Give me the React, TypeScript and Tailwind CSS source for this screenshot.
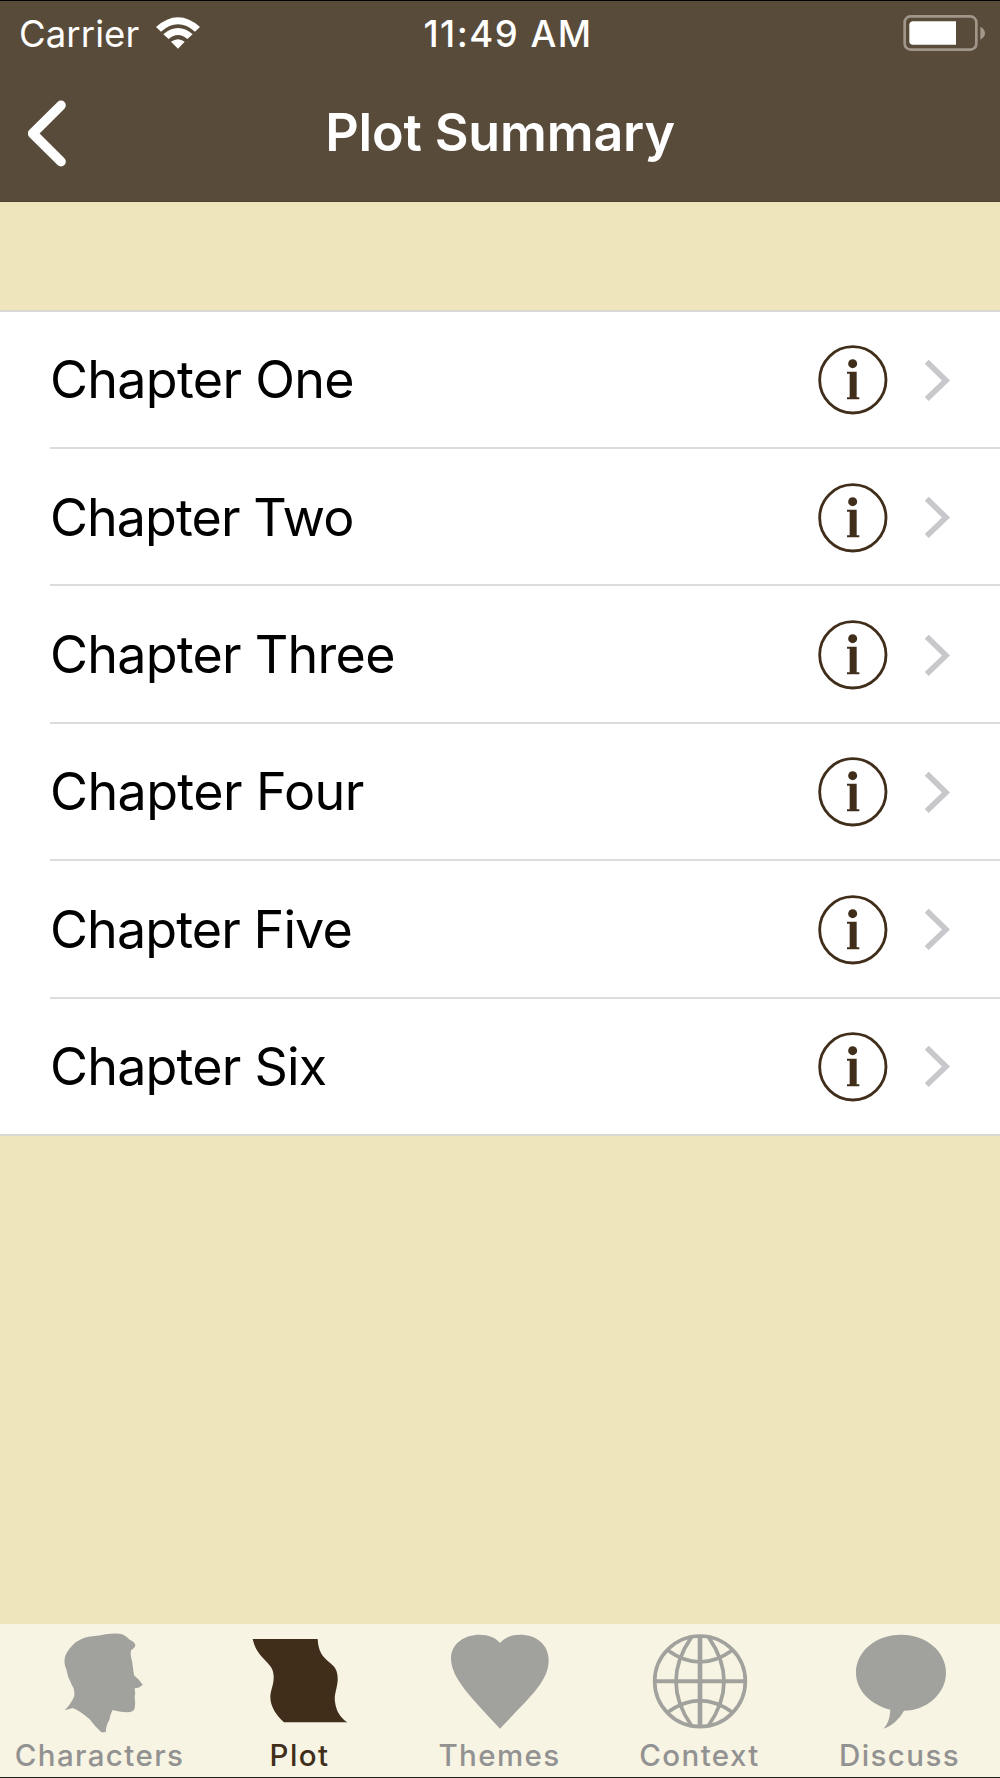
import React from 'react';

const chapters = [
  { name: 'Chapter One', tracking: 'tracking-[-0.7px]' },
  { name: 'Chapter Two', tracking: 'tracking-[-0.95px]' },
  { name: 'Chapter Three', tracking: 'tracking-[-0.75px]' },
  { name: 'Chapter Four', tracking: 'tracking-[-0.6px]' },
  { name: 'Chapter Five', tracking: 'tracking-[-0.9px]' },
  { name: 'Chapter Six', tracking: 'tracking-[-0.8px]' },
];

const tabs = [
  {
    label: 'Characters',
    viewBox: '30 60 300 312',
    icon: (
      <path
        fill="currentColor"
        d="M74 301 Q93 282 103 258 Q105 240 96 226 Q82 200 78 175 Q71 160 75 140 Q84 116 108 96 Q135 78 165 78 Q185 77 196 73 Q232 67 250 74 Q264 82 270 90 Q284 96 286 105 Q286 113 273 121 Q270 133 276 152 L282 196 Q300 211 308 224 Q300 233 284 235 Q287 249 284 262 Q287 280 284 295 Q281 307 262 307 Q235 305 218 300 Q211 312 208 330 Q198 345 197 367 L184 367 Q165 350 149 328 Q120 302 98 294 Z"
      />
    ),
  },
  {
    label: 'Plot',
    active: true,
    viewBox: '60 60 300 312',
    icon: (
      <path
        fill="currentColor"
        d="M68 87 L263 87 C265 125 278 140 296 155 C315 170 324 180 323 212 C320 240 312 255 315 275 C318 302 330 322 352 337 L162 337 C140 318 121 290 121 262 C121 240 132 225 131 198 C131 155 82 150 68 87 Z"
      />
    ),
  },
  {
    label: 'Themes',
    viewBox: '60 60 300 312',
    icon: (
      <path
        fill="currentColor"
        d="M210 99 C225 82 245 74 270 74 C320 74 356 105 356 150 C356 215 300 260 210 356 C125 265 63 205 63 145 C63 100 105 74 148 74 C175 74 198 83 210 99 Z"
      />
    ),
  },
  {
    label: 'Context',
    viewBox: '60 60 300 312',
    icon: (
      <g fill="none" stroke="currentColor" strokeWidth="11">
        <circle cx="210" cy="214" r="136" />
        <path d="M74 214 H346" strokeWidth="12" />
        <path d="M210 78 V350" strokeWidth="14" />
        <path d="M184 82 Q92 214 184 346" />
        <path d="M236 82 Q328 214 236 346" />
        <path d="M113 121 Q210 191 307 121" />
        <path d="M113 307 Q210 237 307 307" />
      </g>
    ),
  },
  {
    label: 'Discuss',
    viewBox: '60 60 300 312',
    icon: (
      <path
        fill="currentColor"
        d="M213 74 C290 74 348 125 348 188 C348 250 290 302 222 302 C210 325 186 348 160 356 C174 342 180 322 181 299 C122 284 78 240 78 188 C78 125 136 74 213 74 Z"
      />
    ),
  },
];

const StatusBar: React.FC = () => (
  <div className="grid grid-cols-3 items-center h-[66px] text-white text-[36.5px] leading-none">
    <div className="flex items-center pl-[19px]">
      <span className="font-normal tracking-[0.1px]">Carrier</span>
      <svg className="w-11 h-8 ml-[17px] mb-0.5" viewBox="469 50 132 96" fill="white">
        <path d="M469 80 Q535 22 601 80 L586 94 Q535 50 484 94 Z" />
        <path d="M491 102 Q535 64 579 102 L563 116 Q535 92 507 116 Z" />
        <path d="M514 124 Q535 109 555 124 L535 145 Z" />
      </svg>
    </div>
    <span className="text-center font-medium whitespace-nowrap tracking-[1.5px] pt-px pl-[16px]">11:49 AM</span>
    <div className="flex justify-end pr-[14px] pb-[3px]">
      <svg className="w-[83px] h-9" viewBox="158 44 249 108">
        <rect x="163" y="48" width="215" height="100" rx="18" fill="none" stroke="#a0978a" strokeWidth="8" />
        <path d="M390 79 Q404 86 404 99 Q404 111 390 118 Z" fill="#a0978a" />
        <path d="M186 63 H317 V133 H186 Q177 131 177 124 V72 Q178 65 186 63 Z" fill="white" />
      </svg>
    </div>
  </div>
);

const NavBar: React.FC = () => (
  <div className="relative flex items-center justify-center h-[134px] pb-[2px]">
    <svg className="absolute left-7 top-[33px] w-[38px] h-[67px]" viewBox="84 299 114 201">
      <path d="M183 315 L98 399.5 L183 484" fill="none" stroke="white" strokeWidth="29" strokeLinecap="round" strokeLinejoin="round" />
    </svg>
    <h1 className="text-white text-[52px] leading-none font-semibold tracking-[-0.15px]">Plot Summary</h1>
  </div>
);

export default function App() {
  return (
    <div className="flex flex-col w-[1000px] h-[1778px] overflow-hidden bg-[#eee5bc] font-['Inter',sans-serif] border-t border-t-black border-b border-b-[#1f1e1b]">
      <header className="h-[201px] shrink-0 bg-[#594b3a] border-b border-[#4c402f]">
        <StatusBar />
        <NavBar />
      </header>

      <ul className="mt-[108px] h-[826px] shrink-0 flex flex-col bg-white border-y-2 border-[#dad8d2]">
        {chapters.map((chapter) => (
          <li key={chapter.name} className="flex h-[137.4px] first:h-[137px] last:h-[135.4px] shrink-0 pl-[50px] group">
            <div className="flex-1 flex items-center pt-[2px] group-first:pt-px group-last:pt-px pr-[50px] border-b-2 border-[#dcdcde] group-last:border-b-0">
              <span className={`flex-1 text-[52px] leading-none text-black ${chapter.tracking}`}>{chapter.name}</span>
              <svg className="w-[70px] h-[70px]" viewBox="114 134 210 210">
                <circle cx="218.5" cy="238.5" r="99.5" fill="none" stroke="#402e1b" strokeWidth="8.5" />
                <circle cx="218" cy="190" r="13.5" fill="#402e1b" />
                <path d="M201 214 H230 V291 H238 V297 H201 V291 H209 V220 H201 Z" fill="#402e1b" />
              </svg>
              <svg className="w-[25px] h-[41px] ml-[37px]" viewBox="436 177 75 123">
                <path d="M441 182 L499 238.5 L441 294" fill="none" stroke="#c7c7cc" strokeWidth="17" />
              </svg>
            </div>
          </li>
        ))}
      </ul>

      <nav className="mt-auto h-[153px] shrink-0 grid grid-cols-5 bg-[#f8f4e3]">
        {tabs.map((tab) => (
          <div key={tab.label} className={`flex flex-col items-center pt-[6px] ${tab.active ? 'text-[#402e1b]' : 'text-[#929292]'}`}>
            <svg className={`w-[100px] h-[104px] ${tab.active ? '' : 'text-[#a1a19d]'}`} viewBox={tab.viewBox}>
              {tab.icon}
            </svg>
            <span className="mt-[7px] pr-px text-[29.5px] leading-none font-medium tracking-[1.4px]">{tab.label}</span>
          </div>
        ))}
      </nav>
    </div>
  );
}
